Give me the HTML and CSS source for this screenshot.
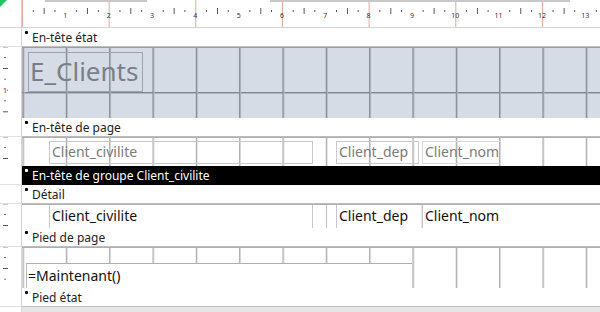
FILE: index.html
```html
<!DOCTYPE html>
<html>
<head>
    <title>E_Clients - Création</title>
    <link rel="stylesheet" href="styles.css">
</head>
<body>
    <div class="designer">
        <!-- Rulers -->
        <div class="top">
            <div class="corner"><span class="selector"></span></div>
            <div class="hruler">
                <div class="scroll-strip"></div>
                <div class="ruler-nums">
                    <span>1</span><span>2</span><span>3</span><span>4</span><span>5</span><span>6</span><span>7</span>
                    <span>8</span><span>9</span><span>10</span><span>11</span><span>12</span><span>13</span>
                </div>
            </div>
        </div>

        <!-- En-tête état -->
        <div class="row bar">
            <div class="vr"></div>
            <div class="bar-title"><span class="mark"></span>En-tête état</div>
        </div>
        <div class="row report-header">
            <div class="vr ticks"><span class="vr-num">1</span></div>
            <div class="area grid-dark">
                <div class="title-label">E_Clients</div>
            </div>
        </div>

        <!-- En-tête de page -->
        <div class="row bar">
            <div class="vr"></div>
            <div class="bar-title"><span class="mark"></span>En-tête de page</div>
        </div>
        <div class="row page-header">
            <div class="vr ticks"></div>
            <div class="area grid-light">
                <div class="label lbl-civ">Client_civilite</div>
                <div class="label lbl-dep">Client_dep</div>
                <div class="label lbl-nom">Client_nom</div>
            </div>
        </div>

        <!-- En-tête de groupe -->
        <div class="row bar selected">
            <div class="vr"></div>
            <div class="bar-title"><span class="mark"></span>En-tête de groupe Client_civilite</div>
        </div>

        <!-- Détail -->
        <div class="row bar">
            <div class="vr"></div>
            <div class="bar-title"><span class="mark"></span>Détail</div>
        </div>
        <div class="row detail">
            <div class="vr ticks"></div>
            <div class="area detail-area">
                <div class="field fld-civ">Client_civilite</div>
                <div class="gap-cell"></div>
                <div class="field fld-dep">Client_dep</div>
                <div class="field fld-nom">Client_nom</div>
            </div>
        </div>

        <!-- Pied de page -->
        <div class="row bar">
            <div class="vr"></div>
            <div class="bar-title"><span class="mark"></span>Pied de page</div>
        </div>
        <div class="row page-footer">
            <div class="vr ticks"></div>
            <div class="area grid-light footer-area">
                <div class="field fld-now">=Maintenant()</div>
            </div>
        </div>

        <!-- Pied état -->
        <div class="row bar">
            <div class="vr"></div>
            <div class="bar-title"><span class="mark"></span>Pied état</div>
        </div>
        <div class="row report-footer">
            <div class="vr"></div>
            <div class="area empty"></div>
        </div>
    </div>
</body>
</html>
```

FILE: styles.css
```css
body {
    margin: 0;
    padding: 0;
    font-family: 'Noto Sans', 'Open Sans', sans-serif;
    background: #ffffff;
    color: #000000;
    overflow: hidden;
}

.designer {
    width: 600px;
    height: 312px;
    display: flex;
    flex-direction: column;
    background: #e6e6e6;
}

/* ---- rulers ---- */

.top {
    display: flex;
    height: 28px;
    border-bottom: 1px solid #d4d4d4;
    box-sizing: border-box;
}

.corner {
    width: 22px;
    flex: none;
    background: #ffffff;
    border-right: 1px solid #d4d4d4;
    box-sizing: border-box;
    position: relative;
}

.selector {
    position: absolute;
    left: 0;
    top: 0;
    width: 0;
    height: 0;
    border-top: 7px solid #22c55e;
    border-right: 7px solid transparent;
}

.hruler {
    flex: 1;
    position: relative;
    background-color: #ffffff;
    background-image:
        linear-gradient(to right, #e3a79c 0 1px, transparent 1px),
        linear-gradient(to right, #555 0 1px, transparent 1px),
        linear-gradient(to right, #555 0 1px, transparent 1px);
    background-size: 86.667px 100%, 43.333px 6px, 21.667px 2px;
    background-position: 86.667px 0, 21.667px 8px, 10.833px 10px;
    background-repeat: repeat-x;
}

.scroll-strip {
    position: absolute;
    top: 0;
    left: 23px;
    right: 0;
    height: 2px;
    background: linear-gradient(to right, #c8c8c8 0 102px, transparent 102px 225px, #c8c8c8 225px 525px, transparent 525px);
}

.ruler-nums {
    display: flex;
    padding-left: 21.667px;
    height: 100%;
    align-items: center;
}

.ruler-nums span {
    width: 43.333px;
    flex: none;
    text-align: center;
    font-size: 7px;
    color: #333;
    padding-top: 3px;
    position: relative;
    z-index: 1;
}

/* ---- rows ---- */

.row {
    display: flex;
    flex: none;
}

.vr {
    width: 22px;
    flex: none;
    background: #ffffff;
    border-right: 1px solid #d4d4d4;
    box-sizing: border-box;
    position: relative;
}

.vr.ticks {
    background-image:
        linear-gradient(#555 0 1px, transparent 1px),
        linear-gradient(#777 0 1px, transparent 1px);
    background-size: 5px 21.667px, 2px 21.667px;
    background-position: 3px 21px, 4px 10px;
    background-repeat: no-repeat repeat;
}

.vr-num {
    position: absolute;
    left: 3px;
    top: 39px;
    font-size: 7px;
    color: #333;
    background: #fff;
    line-height: 9px;
}

.bar {
    height: 19px;
}

.bar .vr {
    border-bottom: 1px solid #e0e0e0;
}

.bar-title {
    flex: 1;
    background: #ffffff;
    font-size: 12px;
    line-height: 19px;
    padding-left: 10px;
    color: #222;
    position: relative;
    border-bottom: 1px solid #bdbdbd;
    box-sizing: border-box;
}

.mark {
    position: absolute;
    left: 3px;
    top: 3px;
    width: 3px;
    height: 3px;
    background: #000;
    border-radius: 1px;
}

.bar.selected .bar-title {
    background: #000000;
    color: #ffffff;
    border-bottom-color: #000;
}

.bar.selected .mark {
    background: #ffffff;
}

.area {
    flex: 1;
    position: relative;
}

/* ---- report header ---- */

.report-header {
    height: 71px;
}

.grid-dark {
    background-color: #d6dce5;
    background-image:
        linear-gradient(to right, #80858f 0 1px, #b3b8c0 1px 2px, transparent 2px),
        linear-gradient(#80858f 0 1px, #b3b8c0 1px 2px, transparent 2px);
    background-size: 43.333px 100%, 100% 100%;
    background-position: 0.5px 0, 0 44px;
    background-repeat: repeat-x, no-repeat;
    border-top: 1px solid #9aa0a8;
    box-sizing: border-box;
}

.title-label {
    position: absolute;
    left: 6px;
    top: 4px;
    width: 115px;
    height: 40px;
    border: 1px solid #9da3ab;
    box-sizing: border-box;
    font-size: 26px;
    line-height: 36px;
    color: #7a7f87;
    padding-left: 1px;
}

/* ---- page header ---- */

.page-header {
    height: 29px;
}

.grid-light {
    background-color: #ffffff;
    background-image: linear-gradient(to right, #a8a8a8 0 1px, #dedede 1px 2px, transparent 2px);
    background-size: 43.333px 100%;
    background-position: 0.5px 0;
    background-repeat: repeat-x;
    border-top: 1px solid #b0b0b0;
    box-sizing: border-box;
}

.label {
    position: absolute;
    top: 3px;
    height: 23px;
    border: 1px solid #c9c9c9;
    box-sizing: border-box;
    font-size: 14px;
    line-height: 20px;
    color: #7b7b7b;
    padding-left: 2px;
    white-space: nowrap;
}

.lbl-civ { left: 27px; width: 264px; }
.lbl-dep { left: 314px; width: 83px; }
.lbl-nom { left: 400px; width: 79px; border-color: #d8d8d8; }

/* ---- detail ---- */

.detail {
    height: 24px;
}

.detail-area {
    display: flex;
    background: #ffffff;
    border-top: 1px solid #b0b0b0;
    box-sizing: border-box;
}

.field {
    background: #ffffff;
    font-size: 14px;
    line-height: 21px;
    color: #111;
    padding-left: 2px;
    white-space: nowrap;
    box-sizing: border-box;
    border-left: 1px solid #c8c8c8;
}

.fld-civ {
    margin-left: 27px;
    width: 264px;
    border-right: 1px solid #c8c8c8;
}

.gap-cell {
    width: 23px;
    flex: none;
    background-image: linear-gradient(to right, transparent 13px, #c0c0c0 13px 14px, transparent 14px);
}

.fld-dep {
    width: 86px;
    border-right: 1px solid #e4e4e4;
}

.fld-nom {
    flex: 1;
}

/* ---- page footer ---- */

.page-footer {
    height: 41px;
}

.footer-area {
    display: flex;
    align-items: flex-end;
}

.fld-now {
    margin-left: 4px;
    width: 386px;
    height: 25px;
    border-left: 1px solid #b8b8b8;
    border-top: 1px solid #b0b0b0;
    line-height: 23px;
    font-size: 14px;
    padding-left: 1px;
}

/* ---- report footer ---- */

.report-footer {
    flex: 1;
}

.report-footer .vr {
    background: #ffffff;
}

.empty {
    background: #e6e6e6;
}
```
